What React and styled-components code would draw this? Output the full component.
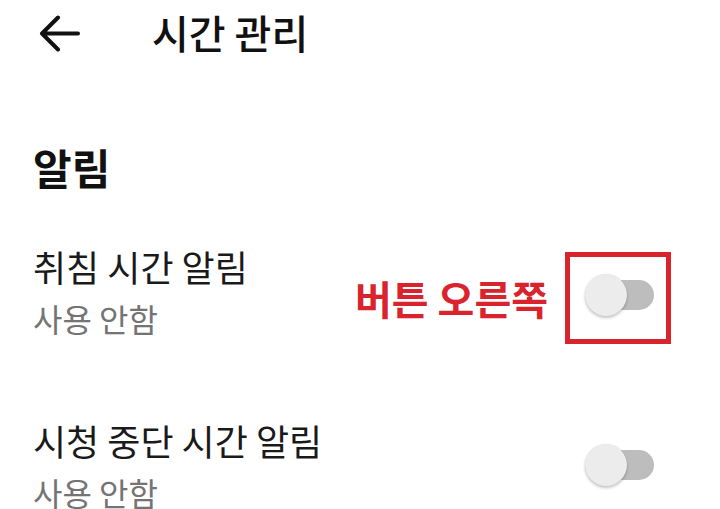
import React from 'react'
import styled, { createGlobalStyle } from 'styled-components'

const GlobalStyle = createGlobalStyle`
  html, body {
    margin: 0;
    padding: 0;
    background: #fff;
    font-family: "Noto Sans CJK KR", "Noto Sans", sans-serif;
    color: #111;
  }
`

export const Page = styled.div`
  width: 720px;
  height: 509px;
  overflow: hidden;
  background: #fff;
`

export const Header = styled.header`
  height: 64px;
  display: flex;
  align-items: center;
  padding-left: 38px;
`

export const BackButton = styled.button`
  width: 44px;
  height: 44px;
  padding: 0;
  border: 0;
  background: none;
  display: flex;
  align-items: center;
  justify-content: center;
`

export const Title = styled.h1`
  margin: 0 0 0 70px;
  font-size: 40px;
  line-height: 1;
  font-weight: 500;
`

export const Content = styled.main`
  padding: 82px 49px 0 33px;
`

export const SectionTitle = styled.h2`
  margin: 0 0 56px;
  font-size: 42px;
  line-height: 42px;
  font-weight: 700;
`

export const List = styled.div`
  display: flex;
  flex-direction: column;
  gap: 81px;
`

export const Row = styled.div`
  display: flex;
  align-items: center;
`

export const TextBlock = styled.div`
  flex: 1;
  display: flex;
  flex-direction: column;
`

export const ItemTitle = styled.div`
  font-size: 36px;
  line-height: 44px;
  color: #1a1a1a;
  white-space: nowrap;
`

export const ItemSub = styled.div`
  margin-top: 11px;
  font-size: 32px;
  line-height: 38px;
  color: #747474;
  white-space: nowrap;
`

export const Note = styled.span`
  position: relative;
  top: 7px;
  margin-right: 17px;
  font-size: 40px;
  line-height: 1;
  font-weight: 700;
  white-space: nowrap;
  color: #d9232d;
`

export const ToggleBox = styled.div`
  position: relative;
  top: ${(props) => (props.marked ? '7px' : '0')};
  box-sizing: border-box;
  width: 106px;
  height: 92px;
  padding: 0 12px 0 15px;
  border: 5px solid ${(props) => (props.marked ? '#d9232d' : 'transparent')};
  display: flex;
  align-items: center;
`

export const Toggle = styled.div`
  position: relative;
  top: ${(props) => (props.marked ? '-3px' : '0')};
  width: 69px;
  height: 42px;
`

export const Track = styled.span`
  position: absolute;
  right: 0;
  top: 6px;
  width: 54px;
  height: 30px;
  border-radius: 15px;
  background: #bdbdbd;
`

export const Thumb = styled.span`
  position: absolute;
  left: 0;
  top: 0;
  width: 42px;
  height: 42px;
  border-radius: 50%;
  background: #ececec;
  box-shadow: 0 2px 3px rgba(0, 0, 0, 0.22), 0 0 1px rgba(0, 0, 0, 0.12);
`

const items = [
  { title: '취침 시간 알림', sub: '사용 안함', note: '버튼 오른쪽' },
  { title: '시청 중단 시간 알림', sub: '사용 안함' },
]

const App = () => {
  return (
    <Page>
      <GlobalStyle />
      <Header>
        <BackButton aria-label="뒤로">
          <svg width="44" height="40" viewBox="0 0 44 40" fill="none">
            <path
              d="M40 21.5H5M20 5.5L4 21.5L20 37.5"
              stroke="#111"
              strokeWidth="4"
              strokeLinecap="round"
              strokeLinejoin="round"
            />
          </svg>
        </BackButton>
        <Title>시간 관리</Title>
      </Header>
      <Content>
        <SectionTitle>알림</SectionTitle>
        <List>
          {items.map((item) => (
            <Row key={item.title}>
              <TextBlock>
                <ItemTitle>{item.title}</ItemTitle>
                <ItemSub>{item.sub}</ItemSub>
              </TextBlock>
              {item.note && <Note>{item.note}</Note>}
              <ToggleBox marked={!!item.note}>
                <Toggle marked={!!item.note}>
                  <Track />
                  <Thumb />
                </Toggle>
              </ToggleBox>
            </Row>
          ))}
        </List>
      </Content>
    </Page>
  )
}

export default App
